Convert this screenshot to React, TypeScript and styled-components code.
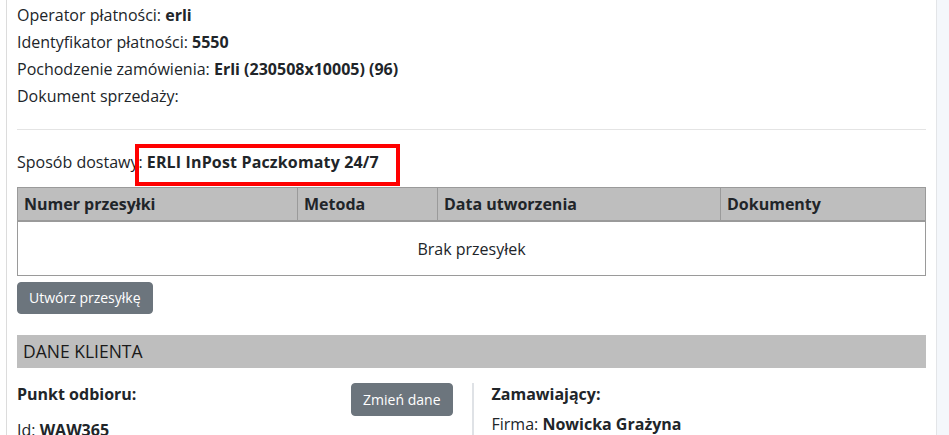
import styled, { createGlobalStyle } from 'styled-components'

const GlobalStyle = createGlobalStyle`
  html, body {
    margin: 0;
    padding: 0;
    background: #ffffff;
  }
  body {
    font-family: "Open Sans", "Liberation Sans", sans-serif;
    color: #212529;
    font-size: 16px;
  }
`

const Page = styled.div`
  display: flex;
  min-height: 435px;
  padding-left: 6px;
  background: #ffffff;
`

const Card = styled.div`
  width: 909px;
  padding: 2px 10px 0;
  border-left: 1px solid #dcdcdc;
  border-right: 1px solid #e3e5e8;
  background: #ffffff;
`

const Side = styled.div`
  flex: 1;
  background: #f4f7fb;
`

const InfoLine = styled.div`
  line-height: 27px;
  height: 27px;
  white-space: nowrap;

  b {
    font-weight: 700;
  }
`

const Divider = styled.hr`
  border: 0;
  border-top: 1px solid #e4e4e4;
  margin: 19px 0;
`

const ShippingLine = styled(InfoLine)`
  position: relative;
  margin-bottom: 11px;

  b {
    letter-spacing: 0.15px;
  }
`

const Highlight = styled.span`
  position: absolute;
  left: 118px;
  top: -5px;
  width: 265px;
  height: 42px;
  box-sizing: border-box;
  border: 4px solid #ff0000;
  pointer-events: none;
`

const Table = styled.table`
  width: 909px;
  border-collapse: collapse;
  table-layout: fixed;
  border: 1px solid #9a9a9a;
`

const HeadCell = styled.th`
  background: #bebebe;
  text-align: left;
  font-weight: 700;
  height: 32px;
  padding: 0 6px;
  border: 1px solid #9a9a9a;
  border-bottom: 2px solid #9a9a9a;
  white-space: nowrap;
`

const EmptyCell = styled.td`
  height: 53px;
  text-align: center;
  padding: 0;
`

const Button = styled.button<{ $tall?: boolean }>`
  font-family: "Open Sans", "Liberation Sans", sans-serif;
  font-size: 14px;
  line-height: ${(p) => (p.$tall ? '21px' : '20px')};
  color: #ffffff;
  background: #6c757d;
  border: 1px solid #6c757d;
  border-radius: 4px;
  cursor: pointer;
  padding: 5px 11px;
`

const CreateButton = styled(Button)`
  margin-top: 6px;
`

const SectionBar = styled.div`
  margin-top: 21px;
  background: #bebebe;
  height: 33px;
  line-height: 33px;
  padding-left: 6px;
  font-size: 17.5px;
  color: #1a1a1a;
`

const Columns = styled.div`
  display: grid;
  grid-template-columns: 1fr 1fr;
  margin-top: 15px;
`

const LeftCol = styled.div`
  padding-right: 19px;
`

const RightCol = styled.div`
  border-left: 2px solid #dfe2e6;
  padding-left: 18px;
`

const ColHead = styled.div`
  display: flex;
  justify-content: space-between;
  align-items: flex-start;
  height: 34px;
`

const Heading = styled.h4`
  margin: 0;
  font-size: 16px;
  font-weight: 700;
  line-height: 20px;
  padding-top: 1px;
`

const RightHeading = styled(Heading)`
  height: 27px;
`

export default function App() {
  return (
    <>
      <GlobalStyle />
      <Page>
        <Card>
          <InfoLine>Operator płatności: <b>erli</b></InfoLine>
          <InfoLine>Identyfikator płatności: <b>5550</b></InfoLine>
          <InfoLine>Pochodzenie zamówienia: <b>Erli (230508x10005) (96)</b></InfoLine>
          <InfoLine>Dokument sprzedaży:</InfoLine>
          <Divider />
          <ShippingLine>
            Sposób dostawy: <b>ERLI InPost Paczkomaty 24/7</b>
            <Highlight />
          </ShippingLine>
          <Table>
            <colgroup>
              <col style={{ width: 280 }} />
              <col style={{ width: 140 }} />
              <col style={{ width: 283 }} />
              <col />
            </colgroup>
            <thead>
              <tr>
                <HeadCell>Numer przesyłki</HeadCell>
                <HeadCell>Metoda</HeadCell>
                <HeadCell>Data utworzenia</HeadCell>
                <HeadCell>Dokumenty</HeadCell>
              </tr>
            </thead>
            <tbody>
              <tr>
                <EmptyCell colSpan={4}>Brak przesyłek</EmptyCell>
              </tr>
            </tbody>
          </Table>
          <CreateButton>Utwórz przesyłkę</CreateButton>
          <SectionBar>DANE KLIENTA</SectionBar>
          <Columns>
            <LeftCol>
              <ColHead>
                <Heading>Punkt odbioru:</Heading>
                <Button $tall>Zmień dane</Button>
              </ColHead>
              <InfoLine>Id: <b>WAW365</b></InfoLine>
            </LeftCol>
            <RightCol>
              <RightHeading>Zamawiający:</RightHeading>
              <InfoLine>Firma: <b>Nowicka Grażyna</b></InfoLine>
            </RightCol>
          </Columns>
        </Card>
        <Side />
      </Page>
    </>
  )
}
